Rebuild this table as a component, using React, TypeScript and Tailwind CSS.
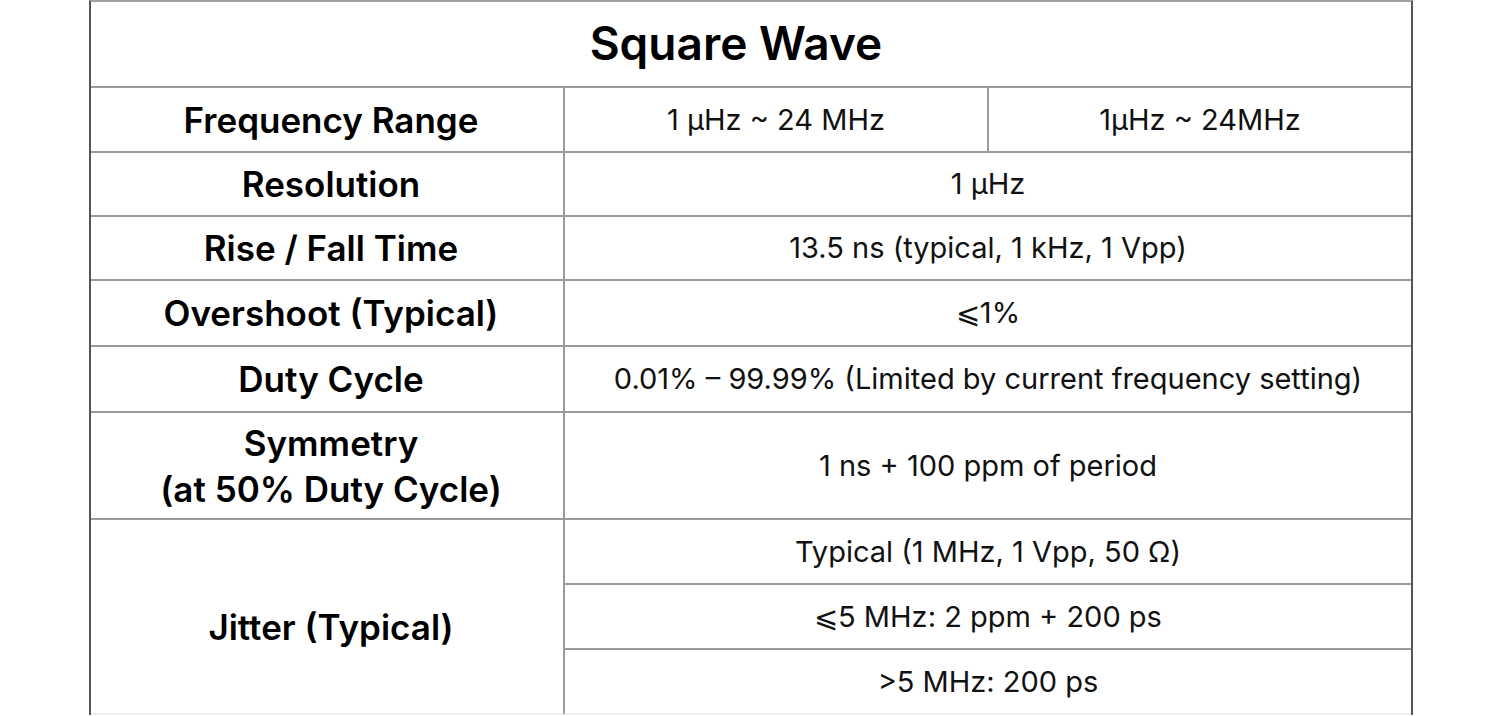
import React from "react";

const line = "border-[#9a9a9a]";

function Head({ children, cls = "" }: { children: React.ReactNode; cls?: string }) {
  return (
    <div
      className={`flex items-center justify-center text-center border-b-2 ${line} pl-[8px] text-[35px] font-semibold leading-[46px] text-black ${cls}`}
    >
      {children}
    </div>
  );
}

function Val({ children, cls = "" }: { children: React.ReactNode; cls?: string }) {
  return (
    <div
      className={`flex items-center justify-center text-center border-b-2 border-l-2 ${line} text-[29px] leading-[40px] text-[#111] ${cls}`}
    >
      {children}
    </div>
  );
}

export default function App() {
  return (
    <div className="w-[1500px] h-[716px] overflow-hidden bg-white" style={{ fontFamily: "Inter, 'Noto Sans', sans-serif" }}>
      <div className="ml-[89px] w-[1324px] border-x-2 border-x-[#555555] border-t-2 border-t-[#a0a0a0]">
        <div className={`h-[86px] flex items-center justify-center border-b-2 ${line} pr-[30px] pb-[2px] text-[46px] font-semibold text-black`}>
          Square Wave
        </div>
        <div className="grid grid-cols-[472px_1fr_1fr] grid-rows-[65px_64px_64px_66px_66px_107px_65px_65px_65px]">
          <Head>Frequency Range</Head>
          <Val>1 μHz ~ 24 MHz</Val>
          <Val>1μHz ~ 24MHz</Val>

          <Head>Resolution</Head>
          <Val cls="col-span-2">1 μHz</Val>

          <Head>Rise / Fall Time</Head>
          <Val cls="col-span-2">13.5 ns (typical, 1 kHz, 1 Vpp)</Val>

          <Head>Overshoot (Typical)</Head>
          <Val cls="col-span-2">⩽1%</Val>

          <Head>Duty Cycle</Head>
          <Val cls="col-span-2">0.01% – 99.99% (Limited by current frequency setting)</Val>

          <Head>
            Symmetry
            <br />
            (at 50% Duty Cycle)
          </Head>
          <Val cls="col-span-2">1 ns + 100 ppm of period</Val>

          <Head cls="row-span-3 pt-[20px] border-b-[#f0f0f0]">Jitter (Typical)</Head>
          <Val cls="col-span-2">Typical (1 MHz, 1 Vpp, 50 Ω)</Val>
          <Val cls="col-span-2">⩽5 MHz: 2 ppm + 200 ps</Val>
          <Val cls="col-span-2 border-b-[#f0f0f0]">&gt;5 MHz: 200 ps</Val>
        </div>
      </div>
    </div>
  );
}
